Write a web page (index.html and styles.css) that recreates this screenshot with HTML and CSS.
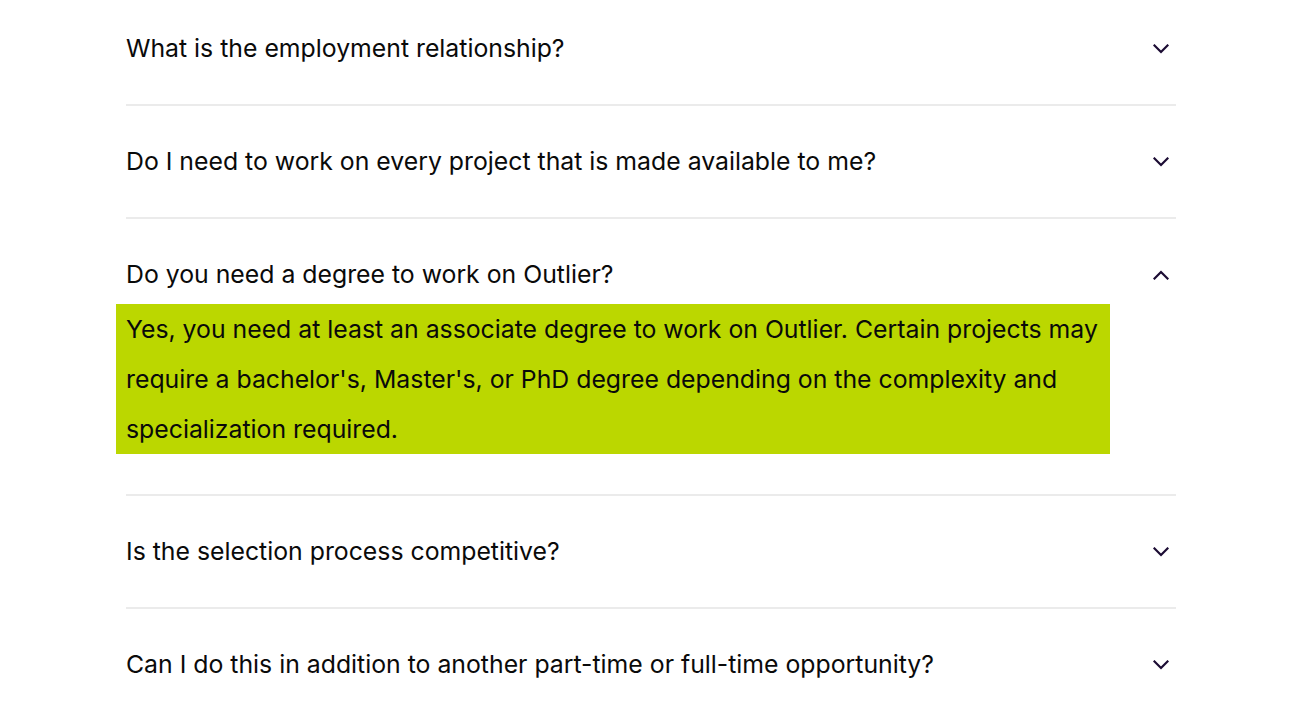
FILE: index.html
```html
<!DOCTYPE html>
<html>

<head>
    <link rel="stylesheet" href="styles.css">
</head>

<body>

    <div class="faq">
        <div class="faq-item">
            <div class="question">
                <span>What is the employment relationship?</span>
                <svg class="chevron" viewBox="0 0 16 10"><path d="M1.5 1.5 L8 8 L14.5 1.5"/></svg>
            </div>
        </div>
        <div class="faq-item">
            <div class="question">
                <span>Do I need to work on every project that is made available to me?</span>
                <svg class="chevron" viewBox="0 0 16 10"><path d="M1.5 1.5 L8 8 L14.5 1.5"/></svg>
            </div>
        </div>
        <div class="faq-item open">
            <div class="question">
                <span>Do you need a degree to work on Outlier?</span>
                <svg class="chevron" viewBox="0 0 16 10"><path d="M1.5 8.5 L8 2 L14.5 8.5"/></svg>
            </div>
            <div class="answer">
                Yes, you need at least an associate degree to work on Outlier. Certain projects may require a bachelor's, Master's, or PhD degree depending on the complexity and specialization required.
            </div>
        </div>
        <div class="faq-item">
            <div class="question">
                <span>Is the selection process competitive?</span>
                <svg class="chevron" viewBox="0 0 16 10"><path d="M1.5 1.5 L8 8 L14.5 1.5"/></svg>
            </div>
        </div>
        <div class="faq-item">
            <div class="question">
                <span>Can I do this in addition to another part-time or full-time opportunity?</span>
                <svg class="chevron" viewBox="0 0 16 10"><path d="M1.5 1.5 L8 8 L14.5 1.5"/></svg>
            </div>
        </div>
    </div>

</body>

</html>
```

FILE: styles.css
```css
body {
    margin: 0;
    background: #fff;
    font-family: Inter, "Noto Sans", sans-serif;
    color: #0a0a0a;
    overflow: hidden;
}

.faq {
    width: 1050px;
    margin: -7px 0 0 126px;
}

.faq-item {
    padding: 40px 0;
    border-bottom: 2px solid #ebebeb;
}

.question {
    display: flex;
    justify-content: space-between;
    align-items: center;
    height: 31px;
    font-size: 24.8px;
    line-height: 31px;
}

.chevron {
    width: 16px;
    height: 10px;
    margin-right: 7px;
    fill: none;
    stroke: #1b0b33;
    stroke-width: 2.2;
    stroke-linecap: square;
}

.answer {
    width: 984px;
    margin: 14px 0 0 -10px;
    padding: 0 0 0 10px;
    background-color: #bbd700;
    font-size: 24.8px;
    line-height: 50px;
}
```
